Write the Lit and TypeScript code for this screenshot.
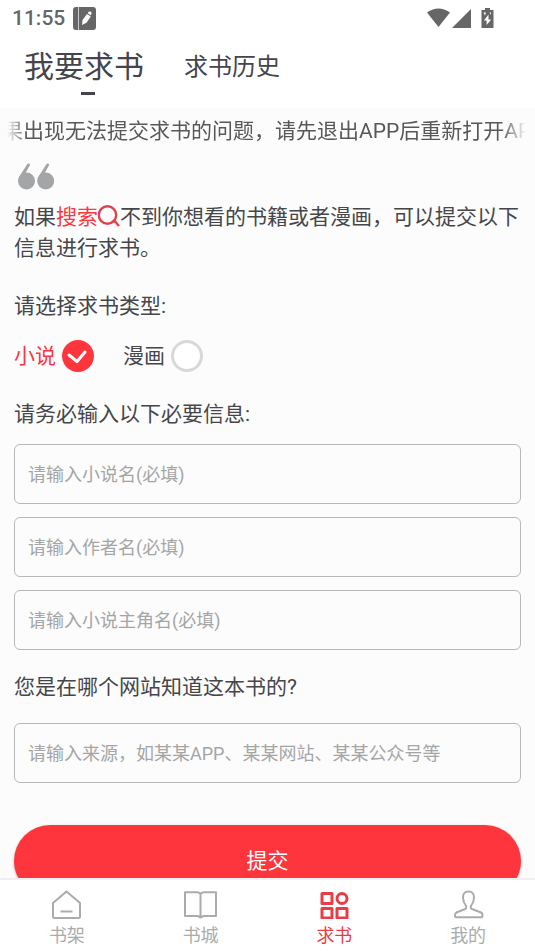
import { LitElement, html, css, svg } from "lit";
import { customElement, property, state } from "lit/decorators.js";
import { classMap } from "lit/directives/class-map.js";

const reset = css`
  * {
    box-sizing: border-box;
    margin: 0;
    padding: 0;
  }
  button,
  input {
    font: inherit;
    color: inherit;
    border: none;
    background: none;
  }
  a {
    color: inherit;
    text-decoration: none;
  }
  svg {
    display: block;
    flex: none;
  }
`;

@customElement("status-bar")
class StatusBar extends LitElement {
  static styles = [
    reset,
    css`
      :host {
        display: flex;
        justify-content: space-between;
        align-items: center;
        height: 36px;
        padding: 0 40px 0 12px;
        color: #666;
        font-size: 21px;
        font-weight: 500;
      }
      .group {
        display: flex;
        align-items: center;
        gap: 8px;
      }
      .signals {
        gap: 2px;
      }
    `,
  ];

  render() {
    return html`
      <div class="group">
        <time>11:55</time>
        <svg width="23" height="23" viewBox="0 0 23 23" aria-hidden="true">
          <rect width="23" height="23" rx="3" fill="#666" />
          <path d="M5.500 0v23" stroke="#c8c8c8" stroke-width="1" />
          <path d="M9 18l.5-5 4.500-6 3.800 2.600-4.300 6.200zM14.700 6l1-1.200q.9-.8 2.100 0 1.200 1 .6 2.200l-.8 1.200z" fill="#fff" />
        </svg>
      </div>
      <div class="group signals">
        <svg width="23" height="20" viewBox="0 0 23 20" aria-hidden="true">
          <path d="M0 4.500Q11.500-3.500 23 4.500L11.500 19z" fill="#666" />
        </svg>
        <svg width="19" height="19" viewBox="0 0 19 19" aria-hidden="true">
          <path d="M19 0v19H0z" fill="#666" />
        </svg>
        <svg width="22" height="20" viewBox="2 0 22 20" aria-hidden="true">
          <path d="M14 0h5v2h3.500v18h-12V2H14z" fill="#666" />
          <path d="M17.500 6.500v5h2.700L15.600 17v-4.500h-2.700zM12.500 4.500h2.500l-1 3zM18.500 4.500h1.500v2.500z" fill="#fff" />
        </svg>
      </div>
    `;
  }
}

@customElement("page-tabs")
class PageTabs extends LitElement {
  @state() active = 0;

  static styles = [
    reset,
    css`
      .tabs {
        display: flex;
        align-items: center;
        gap: 32px;
        height: 72px;
        padding: 0 24px 13px;
      }
      .tab {
        position: relative;
        height: 59px;
        padding: 0 8px 3px 0;
        font-size: 24px;
        color: #45434c;
      }
      .tab.active {
        font-size: 30px;
      }
      .tab.active::after {
        content: "";
        position: absolute;
        left: calc(50% - 7px);
        bottom: 0;
        width: 14px;
        height: 3px;
        background: #45434c;
      }
    `,
  ];

  render() {
    return html`<div class="tabs" role="tablist">
      ${["我要求书", "求书历史"].map(
        (name, i) => html`<button
          role="tab"
          aria-selected=${i === this.active}
          class=${classMap({ tab: true, active: i === this.active })}
          @click=${() => (this.active = i)}
        >${name}</button>`
      )}
    </div>`;
  }
}

@customElement("request-form")
class RequestForm extends LitElement {
  @state() kind = "小说";

  static styles = [
    reset,
    css`
      :host {
        display: block;
        padding: 8px 14px 24px;
        font-size: 21px;
        line-height: 31px;
        color: #45464a;
      }
      .marquee {
        margin: 0 -5px 16px -7px;
        overflow: hidden;
        white-space: nowrap;
        text-indent: -26px;
        color: #585858;
        mask-image: linear-gradient(90deg, transparent, #000 20px, #000 calc(100% - 24px), transparent);
      }
      .quote {
        margin-left: 4px;
      }
      .intro {
        margin-top: 12px;
      }
      .search {
        color: #fb3640;
      }
      .search svg {
        display: inline-block;
        vertical-align: -4px;
      }
      fieldset {
        border: none;
        margin-top: 27px;
      }
      .kinds {
        display: flex;
        gap: 29px;
        margin-top: 18px;
      }
      .kind {
        display: flex;
        align-items: center;
        gap: 6px;
      }
      .kind.on {
        color: #fb3640;
      }
      .mark {
        display: grid;
      }
      .mark > * {
        grid-area: 1 / 1;
      }
      .radio {
        appearance: none;
        width: 32px;
        height: 32px;
        border: 3px solid #d8d8d8;
        border-radius: 50%;
        background: #fff;
      }
      .radio:checked {
        border-color: #ff353d;
        background: #ff353d;
      }
      .check {
        pointer-events: none;
      }
      .fields {
        display: grid;
        gap: 13px;
        margin-top: 14px;
      }
      .field {
        width: 100%;
        height: 60px;
        padding: 0 13px;
        border: 1px solid #b8b8b8;
        border-radius: 6px;
        font-size: 18px;
      }
      .field::placeholder {
        color: #a5a5a5;
        opacity: 1;
      }
      .source {
        display: block;
        margin-top: 22px;
      }
      .source + .fields {
        margin-top: 20px;
      }
      .submit {
        width: 100%;
        height: 72px;
        margin-top: 42px;
        border-radius: 36px;
        background: #ff353d;
        color: #fff;
        box-shadow: 0 1px 3px #0004;
      }
    `,
  ];

  render() {
    return html`
      <p class="marquee">如果出现无法提交求书的问题\uff0c请先退出APP后重新打开APP</p>
      <svg class="quote" width="37" height="27" viewBox="0 0 37 27" fill="#a3a5a7" aria-hidden="true">
        <circle cx="8.500" cy="18" r="8.500" />
        <circle cx="27.700" cy="18" r="8.500" />
        <path d="M1 14L9.500.800Q10.800 0 11.700 1L12 2 7 11zM20.200 14L28.700.800Q30 0 30.900 1L31.200 2 26.200 11z" />
      </svg>
      <p class="intro">
        如果<a class="search" href="#search">搜索<svg width="22" height="23" viewBox="0 0 22 23" fill="none" stroke="#df424a" stroke-width="2.400" aria-hidden="true">
          <circle cx="9.500" cy="10" r="8.700" />
          <path d="M14 17l2.500-1.200 4.500 5.200" />
        </svg></a>不到你想看的书籍或者漫画\uff0c可以提交以下信息进行求书。
      </p>
      <form @submit=${(e: Event) => e.preventDefault()}>
        <fieldset>
          <legend>请选择求书类型:</legend>
          <div class="kinds">
            ${["小说", "漫画"].map(
              (kind) => html`<label class=${classMap({ kind: true, on: kind === this.kind })}>
                ${kind}
                <span class="mark">
                  <input
                    class="radio"
                    type="radio"
                    name="kind"
                    .checked=${kind === this.kind}
                    @change=${() => (this.kind = kind)}
                  />
                  ${kind === this.kind
                    ? html`<svg class="check" width="32" height="32" viewBox="0 0 32 32" fill="none" aria-hidden="true">
                        <path d="M7 15l8 6.500 8-9.500" stroke="#fff" stroke-width="3" stroke-linecap="round" stroke-linejoin="round" />
                      </svg>`
                    : ""}
                </span>
              </label>`
            )}
          </div>
        </fieldset>
        <fieldset>
          <legend>请务必输入以下必要信息:</legend>
          <div class="fields">
            ${["小说名", "作者名", "小说主角名"].map(
              (name) => html`<input class="field" type="text" aria-label=${name} placeholder="请输入${name}(必填)" />`
            )}
          </div>
        </fieldset>
        <label class="source" for="source">您是在哪个网站知道这本书的?</label>
        <div class="fields">
          <input class="field" id="source" type="text" placeholder="请输入来源\uff0c如某某APP、某某网站、某某公众号等" />
        </div>
        <button class="submit" type="submit">提交</button>
      </form>
    `;
  }
}

const navItems = [
  {
    name: "书架",
    icon: svg`<path d="M3 13L16.500 1.500 30 13V26.500Q30 28 28.500 28H4.500Q3 28 3 26.500zM10.500 21.500h12" />`,
  },
  {
    name: "书城",
    icon: svg`<path d="M16.500 4Q15 2.200 13 2.200H1V26H13.500L16.500 27.500 19.500 26H32V2.200H20Q18 2.200 16.500 4zV27" />`,
  },
  {
    name: "求书",
    icon: svg`<g stroke-width="3"><path d="M4 3.500h10v10H4zM4 18.500h10v9.500H4zM19 18.500h10v9.500H19z" /><circle cx="24" cy="8.500" r="5" /></g>`,
  },
  {
    name: "我的",
    icon: svg`<path d="M16.500 1.500C12.500 1.500 10.800 4 11 8c.2 3.500 1.200 5.500 2.800 7.500 1 1.800.4 3-1.300 3.800L4.500 22.500Q3 23.300 3 25.500 3 27.300 4.200 27.300H29.300Q30.500 27.300 30.500 25.500 30.500 23.300 29 22.500L20.500 19.300C18.800 18.500 18.200 17.300 19.200 15.500 20.800 13.500 21.800 11.500 22 8 22.200 4 20.500 1.500 16.500 1.500z" />`,
  },
];

@customElement("bottom-nav")
class BottomNav extends LitElement {
  @property() current = "";

  static styles = [
    reset,
    css`
      .nav {
        display: grid;
        grid-template-columns: repeat(4, 1fr);
        border-top: 2px solid #f0f0f0;
        background: #fff;
      }
      .item {
        display: flex;
        flex-direction: column;
        align-items: center;
        gap: 5px;
        padding: 10px 0 3px;
        color: #aaacac;
        font-size: 18px;
        line-height: 24px;
      }
      .item.on {
        color: #e93d46;
      }
    `,
  ];

  render() {
    return html`<nav class="nav">
      ${navItems.map(
        ({ name, icon }) => html`<a href="#${name}" class=${classMap({ item: true, on: name === this.current })}>
          <svg width="33" height="29" viewBox="0 0 33 29" fill="none" stroke="currentColor" stroke-width="2" stroke-linejoin="round" aria-hidden="true">${icon}</svg>
          ${name}
        </a>`
      )}
    </nav>`;
  }
}

@customElement("app-root")
class AppRoot extends LitElement {
  static styles = css`
    :host {
      display: flex;
      flex-direction: column;
      height: 100vh;
      background: #fff;
      font-family: Roboto, "Noto Sans CJK SC", sans-serif;
    }
    .page {
      flex: 1;
      min-height: 0;
      overflow-y: auto;
      scrollbar-width: none;
      background: #fcfcfc;
    }
  `;

  render() {
    return html`
      <status-bar></status-bar>
      <page-tabs></page-tabs>
      <main class="page"><request-form></request-form></main>
      <bottom-nav current="求书"></bottom-nav>
    `;
  }
}
